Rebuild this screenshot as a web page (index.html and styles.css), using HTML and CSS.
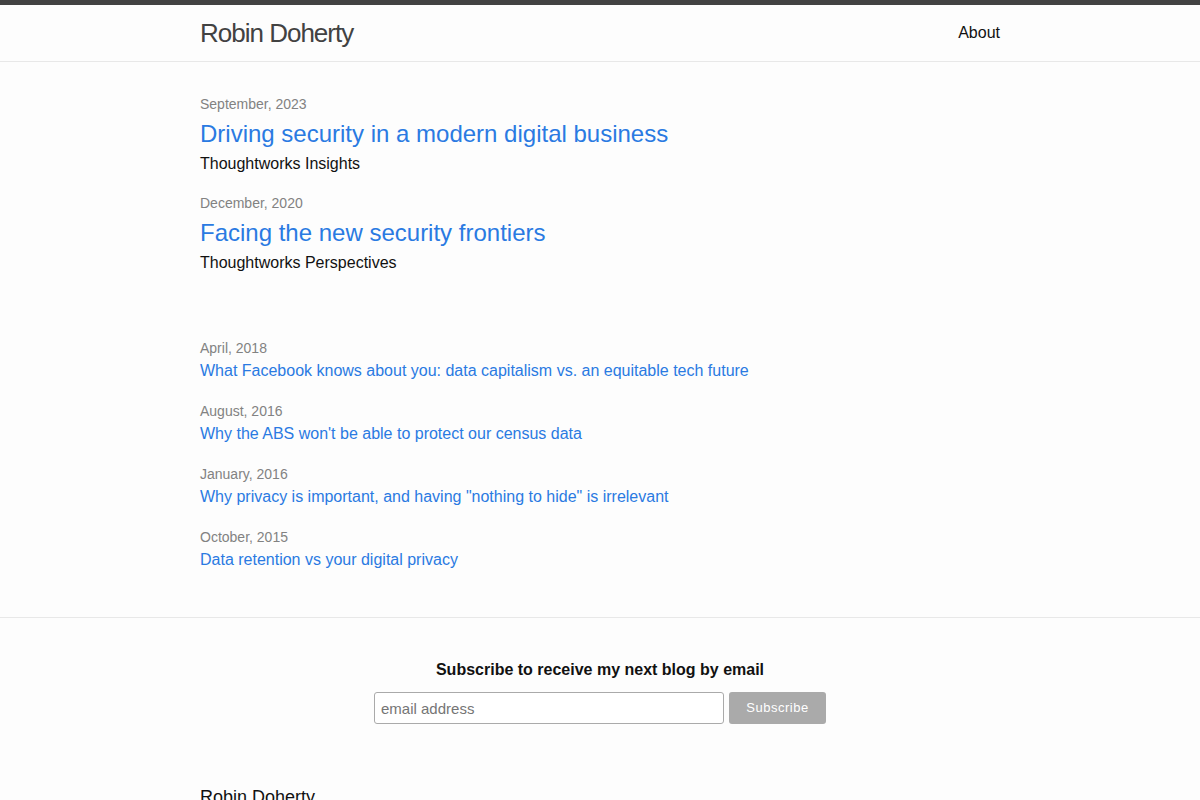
FILE: index.html
```html
<!DOCTYPE html>
<html lang="en">
<head>
    <meta charset="UTF-8">
    <meta name="viewport" content="width=device-width, initial-scale=1.0">
    <title>Robin Doherty</title>
    <link rel="stylesheet" href="styles.css">
</head>
<body>
    <header class="site-header">
        <div class="wrapper header-row">
            <a class="site-title" href="#">Robin Doherty</a>
            <nav class="site-nav">
                <a class="page-link" href="#">About</a>
            </nav>
        </div>
    </header>

    <main class="page-content">
        <div class="wrapper">
            <ul class="post-list featured">
                <li>
                    <span class="post-meta">September, 2023</span>
                    <h3 class="post-title"><a href="#">Driving security in a modern digital business</a></h3>
                    <p class="post-source">Thoughtworks Insights</p>
                </li>
                <li>
                    <span class="post-meta">December, 2020</span>
                    <h3 class="post-title"><a href="#">Facing the new security frontiers</a></h3>
                    <p class="post-source">Thoughtworks Perspectives</p>
                </li>
            </ul>

            <ul class="post-list archive">
                <li>
                    <span class="post-meta">April, 2018</span>
                    <a class="post-link" href="#">What Facebook knows about you: data capitalism vs. an equitable tech future</a>
                </li>
                <li>
                    <span class="post-meta">August, 2016</span>
                    <a class="post-link" href="#">Why the ABS won't be able to protect our census data</a>
                </li>
                <li>
                    <span class="post-meta">January, 2016</span>
                    <a class="post-link" href="#">Why privacy is important, and having "nothing to hide" is irrelevant</a>
                </li>
                <li>
                    <span class="post-meta">October, 2015</span>
                    <a class="post-link" href="#">Data retention vs your digital privacy</a>
                </li>
            </ul>
        </div>
    </main>

    <footer class="site-footer">
        <div class="wrapper">
            <form class="subscribe">
                <h4>Subscribe to receive my next blog by email</h4>
                <div class="subscribe-row">
                    <input type="email" placeholder="email address">
                    <button type="button">Subscribe</button>
                </div>
            </form>
            <h2 class="footer-heading">Robin Doherty</h2>
        </div>
    </footer>
</body>
</html>
```

FILE: styles.css
```css
body {
    margin: 0;
    padding: 0;
    font-family: "Liberation Sans", Arial, sans-serif;
    font-size: 16px;
    line-height: 1.5;
    color: #111;
    background-color: #fdfdfd;
}

a {
    color: #2a7ae2;
    text-decoration: none;
}

.wrapper {
    max-width: 800px;
    margin: 0 auto;
}

.site-header {
    border-top: 5px solid #424242;
    border-bottom: 1px solid #e8e8e8;
    min-height: 56px;
}

.header-row {
    display: flex;
    justify-content: space-between;
    align-items: center;
}

.site-title {
    font-size: 26px;
    line-height: 56px;
    letter-spacing: -1px;
    color: #424242;
}

.page-link {
    color: #111;
    line-height: 56px;
}

.page-content {
    padding: 32px 0 45px;
}

.post-list {
    list-style: none;
    margin: 0;
    padding: 0;
}

.featured li {
    margin-bottom: 17px;
}

.archive li {
    margin-bottom: 18px;
}

.post-list li:last-child {
    margin-bottom: 0;
}

.featured {
    margin-bottom: 63px;
}

.post-meta {
    display: block;
    font-size: 14px;
    color: #828282;
}

.post-title {
    margin: 1px 0 0;
    font-size: 24px;
    font-weight: normal;
    line-height: 36px;
}

.post-source {
    margin: 0;
}

.post-link {
    display: block;
}

.site-footer {
    border-top: 1px solid #e8e8e8;
    padding: 40px 0 30px;
}

.subscribe {
    text-align: center;
}

.subscribe h4 {
    margin: 0 0 10px;
    font-size: 16px;
}

.subscribe-row {
    display: flex;
    justify-content: center;
    gap: 5px;
}

.subscribe input {
    width: 350px;
    height: 32px;
    box-sizing: border-box;
    padding: 0 6px;
    border: 1px solid #aaa;
    border-radius: 3px;
    font-family: "Liberation Sans", Arial, sans-serif;
    font-size: 15px;
    background: #fff;
}

.subscribe button {
    width: 97px;
    height: 32px;
    padding-bottom: 2px;
    border: none;
    border-radius: 3px;
    background-color: #aaa;
    color: #fff;
    font-family: "Liberation Sans", Arial, sans-serif;
    font-size: 13px;
    letter-spacing: 0.5px;
}

.footer-heading {
    margin: 60px 0 15px;
    font-size: 18px;
    font-weight: normal;
}
```
